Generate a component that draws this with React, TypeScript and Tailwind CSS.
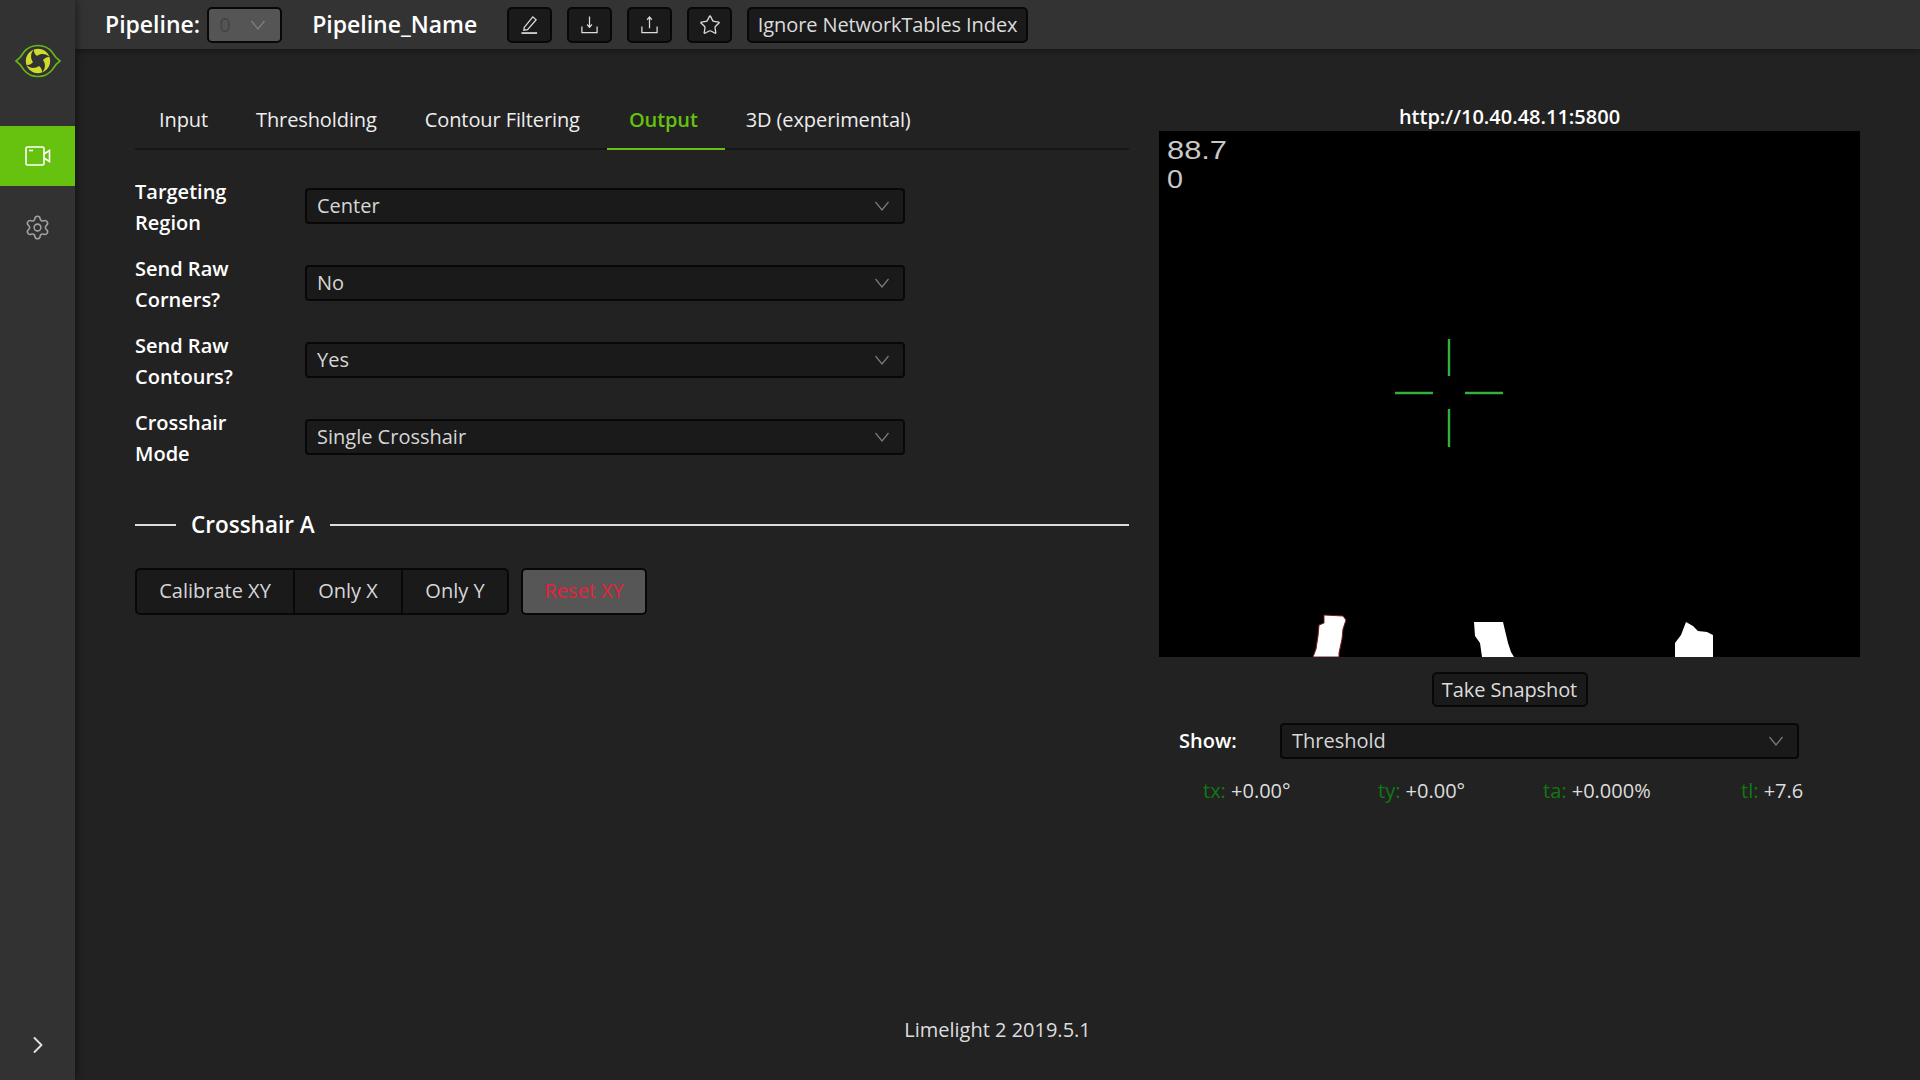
import React from "react";
import { Settings, Star, ChevronRight } from "lucide-react";

const FONT = "font-['Open_Sans','Noto_Sans',sans-serif]";

function Chevron({ className = "stroke-[#7c7c7c]" }: { className?: string }) {
  return (
    <svg width="16" height="10" viewBox="0 0 16 10" fill="none" className={className}>
      <path d="M1.5 1 L8 9 L14.5 1" strokeWidth="1.2" />
    </svg>
  );
}

function Select({ value, className = "" }: { value: string; className?: string }) {
  return (
    <div className={`flex h-[36px] items-center justify-between rounded-[4px] border-2 border-[#080808] bg-[#1a1a1a] pl-[10px] pr-[13px] text-[20px] text-[#d6d6d6] ${className}`}>
      <span>{value}</span>
      <Chevron />
    </div>
  );
}

function Row({ l1, l2, value }: { l1: string; l2: string; value: string }) {
  return (
    <div className="mb-[15px] flex h-[62px] items-center">
      <div className="w-[170px] text-[20px] font-semibold leading-[31px] text-white">
        {l1}
        <br />
        {l2}
      </div>
      <Select value={value} className="mb-[2px] w-[600px]" />
    </div>
  );
}

function IconBtn({ children }: { children: React.ReactNode }) {
  return (
    <div className="flex h-[36px] w-[45px] items-center justify-center rounded-[5px] border-2 border-[#080808] bg-[#1a1a1a] text-[#dcdcdc]">
      {children}
    </div>
  );
}

function Logo() {
  const blade = "M-4 -11.5 C2 -13.5 9 -11 11.5 -4 C8 -7.5 3 -8 -1 -5 C-3 -6.5 -4.5 -9 -4 -11.5 Z";
  return (
    <svg width="46" height="34" viewBox="-23 -17 46 34">
      <path
        d="M-22 0 C-19 -2 -17 -4 -14 -9 C-10 -14 -5 -15.5 0 -15.5 C5 -15.5 10 -14 14 -9 C17 -4 19 -2 22 0 C19 2 17 4 14 9 C10 14 5 15.5 0 15.5 C-5 15.5 -10 14 -14 9 C-17 4 -19 2 -22 0 Z"
        fill="none"
        stroke="#66b814"
        strokeWidth="1.6"
      />
      {[0, 90, 180, 270].map((a) => (
        <path key={a} d={blade} fill="#cfdc2e" transform={`rotate(${a})`} />
      ))}
    </svg>
  );
}

function Stat({ k, v, className }: { k: string; v: string; className: string }) {
  return (
    <div className={`whitespace-nowrap ${className}`}>
      <span className="text-[#0f7a0f]">{k}</span> <span className="text-[#dddddd]">{v}</span>
    </div>
  );
}

export default function App() {
  return (
    <div className={`${FONT} flex h-[1080px] w-[1920px] overflow-hidden bg-[#222222]`}>
      <aside className="relative z-20 flex w-[75px] shrink-0 flex-col bg-[#323232] shadow-[2px_0_8px_rgba(0,0,0,0.4)]">
        <div className="flex h-[126px] items-start justify-center pt-[44px]">
          <Logo />
        </div>
        <div className="flex h-[60px] items-center justify-center bg-[#66c20e]">
          <svg width="26" height="20" viewBox="0 0 26 20" fill="none" stroke="white" strokeWidth="1.6">
            <rect x="1" y="1" width="18" height="18" rx="1.5" />
            <path d="M4 4.5 H8" />
            <path d="M19 8 L24.5 4.5 V15.5 L19 12" />
          </svg>
        </div>
        <div className="flex h-[83px] items-center justify-center">
          <Settings size={27} strokeWidth={1.4} className="text-[#a0a0a0]" />
        </div>
        <div className="mt-auto flex h-[70px] items-center justify-center">
          <ChevronRight size={28} strokeWidth={1.6} className="text-[#e0e0e0]" />
        </div>
      </aside>

      <div className="flex min-w-0 flex-1 flex-col">
        <header className="relative z-10 flex h-[49px] shrink-0 items-center bg-[#333333] pl-[30px] shadow-[0_2px_6px_rgba(0,0,0,0.35)]">
          <span className="text-[23px] font-semibold text-white">Pipeline:</span>
          <div className="ml-[7px] flex h-[36px] w-[75px] items-center justify-between rounded-[5px] border-2 border-[#080808] bg-[#555555] pl-[10px] pr-[14px] text-[20px] text-[#444444]">
            <span>0</span>
            <Chevron className="stroke-[#808080]" />
          </div>
          <span className="ml-[30px] w-[195px] text-[23px] font-semibold text-white">Pipeline_Name</span>
          <div className="flex items-center gap-[15px]">
            <IconBtn>
              <svg width="19" height="19" viewBox="0 0 18 20" fill="none" stroke="currentColor" strokeWidth="1.3">
                <path d="M3.5 13 L12.5 2 L16 5 L7 15.5 L3 16 Z" />
                <path d="M0.5 19 H17" strokeWidth="1.8" />
              </svg>
            </IconBtn>
            <IconBtn>
              <svg width="19" height="19" viewBox="0 0 18 20" fill="none" stroke="currentColor" strokeWidth="1.3">
                <path d="M9 1.5 V13 M6.5 10 L9 13 L11.5 10" />
                <path d="M1 12 V18.5 H17 V12" />
              </svg>
            </IconBtn>
            <IconBtn>
              <svg width="19" height="19" viewBox="0 0 18 20" fill="none" stroke="currentColor" strokeWidth="1.3">
                <path d="M9 14 V2 M6.5 5 L9 2 L11.5 5" />
                <path d="M1 12 V18.5 H17 V12" />
              </svg>
            </IconBtn>
            <IconBtn>
              <Star size={22} strokeWidth={1.4} />
            </IconBtn>
            <div className="flex h-[36px] w-[281px] items-center justify-center rounded-[5px] border-2 border-[#080808] bg-[#1a1a1a] pt-[1px] text-[20px] tracking-[-0.1px] text-[#dcdcdc]">
              Ignore NetworkTables Index
            </div>
          </div>
        </header>

        <div className="flex flex-1 pl-[60px]">
          <main className="w-[994px] shrink-0 pt-[51px]">
            <div className="flex h-[50px] border-b-2 border-[#161616] text-[20px] tracking-[-0.1px] text-[#eeeeee]">
              <div className="flex items-center px-[24px] pb-[9px]">Input</div>
              <div className="flex items-center px-[24px] pb-[9px]">Thresholding</div>
              <div className="flex items-center px-[24px] pb-[9px]">Contour Filtering</div>
              <div className="-mb-[2px] ml-[3px] flex items-center border-b-2 border-[#66c20e] pb-[8px] pl-[22px] pr-[27px] font-semibold text-[#66c20e]">Output</div>
              <div className="flex items-center pb-[9px] pl-[21px] pr-[24px]">3D (experimental)</div>
            </div>
            <div className="mt-[26px]">
              <Row l1="Targeting" l2="Region" value="Center" />
              <Row l1="Send Raw" l2="Corners?" value="No" />
              <Row l1="Send Raw" l2="Contours?" value="Yes" />
              <Row l1="Crosshair" l2="Mode" value="Single Crosshair" />
            </div>
            <div className="mt-[39px] flex items-center">
              <div className="h-[2px] w-[41px] bg-[#dddddd]" />
              <span className="mx-[15px] text-[22.5px] font-semibold text-white">Crosshair A</span>
              <div className="h-[2px] flex-1 bg-[#dddddd]" />
            </div>
            <div className="mt-[26px] flex">
              <div className="flex h-[47px] overflow-hidden rounded-[5px] border-2 border-[#080808] bg-[#1a1a1a] text-[20px] text-[#d6d6d6]">
                <div className="flex w-[158px] items-center justify-center border-r-2 border-[#080808]">Calibrate XY</div>
                <div className="flex w-[108px] items-center justify-center border-r-2 border-[#080808]">Only X</div>
                <div className="flex w-[104px] items-center justify-center">Only Y</div>
              </div>
              <div className="ml-[12px] flex h-[47px] w-[126px] items-center justify-center rounded-[5px] border-2 border-[#080808] bg-[#565656] text-[20px] text-[#e8213a]">
                Reset XY
              </div>
            </div>
          </main>

          <section className="ml-[30px] flex w-[701px] shrink-0 flex-col items-center pt-[53px]">
            <div className="flex h-[29px] items-center text-[20px] font-semibold text-white">http://10.40.48.11:5800</div>
            <svg width="701" height="526" viewBox="0 0 701 526" className="block shrink-0 bg-black">
              <text x="8" y="28" fill="#c8c8c8" fontSize="26" textLength="60" lengthAdjust="spacingAndGlyphs" fontFamily="'Liberation Sans', sans-serif">88.7</text>
              <text x="8" y="57" fill="#c8c8c8" fontSize="26" textLength="16" lengthAdjust="spacingAndGlyphs" fontFamily="'Liberation Sans', sans-serif">0</text>
              <g stroke="#34b03c" strokeWidth="2.4">
                <path d="M236 262 H274 M306 262 H344 M290 208 V245 M290 278 V316" />
              </g>
              <path d="M165 484 L184 485 L187 489 L184 498 L183 508 L180 522 L180 526 L154 526 L157 518 L159 505 L160 494 L165 492 Z" fill="#fff" stroke="#7a1a26" strokeWidth="1" />
              <path d="M315 491 L344 491 L349 512 L352 521 L355 526 L323 526 L321 512 L316 505 Z" fill="#fff" />
              <path d="M527 491 L534 495 L539 500 L548 501 L554 504 L554 526 L516 526 L516 512 L522 504 Z" fill="#fff" />
            </svg>
            <div className="mt-[15px] flex h-[35px] w-[156px] items-center justify-center rounded-[5px] border-2 border-[#080808] bg-[#1a1a1a] text-[20px] tracking-[-0.1px] text-[#dcdcdc]">
              Take Snapshot
            </div>
            <div className="mt-[16px] flex w-full items-center pl-[20px]">
              <span className="w-[101px] text-[20px] font-semibold text-white">Show:</span>
              <Select value="Threshold" className="w-[519px]" />
            </div>
            <div className="mt-[17px] flex w-full items-center pl-[44px] text-[20px]">
              <Stat k="tx:" v="+0.00°" className="w-[175px]" />
              <Stat k="ty:" v="+0.00°" className="w-[165px]" />
              <Stat k="ta:" v="+0.000%" className="w-[198px]" />
              <Stat k="tl:" v="+7.6" className="" />
            </div>
          </section>
        </div>

        <footer className="flex h-[65px] shrink-0 items-start justify-center text-[20px] text-[#dddddd]">
          Limelight 2 2019.5.1
        </footer>
      </div>
    </div>
  );
}
